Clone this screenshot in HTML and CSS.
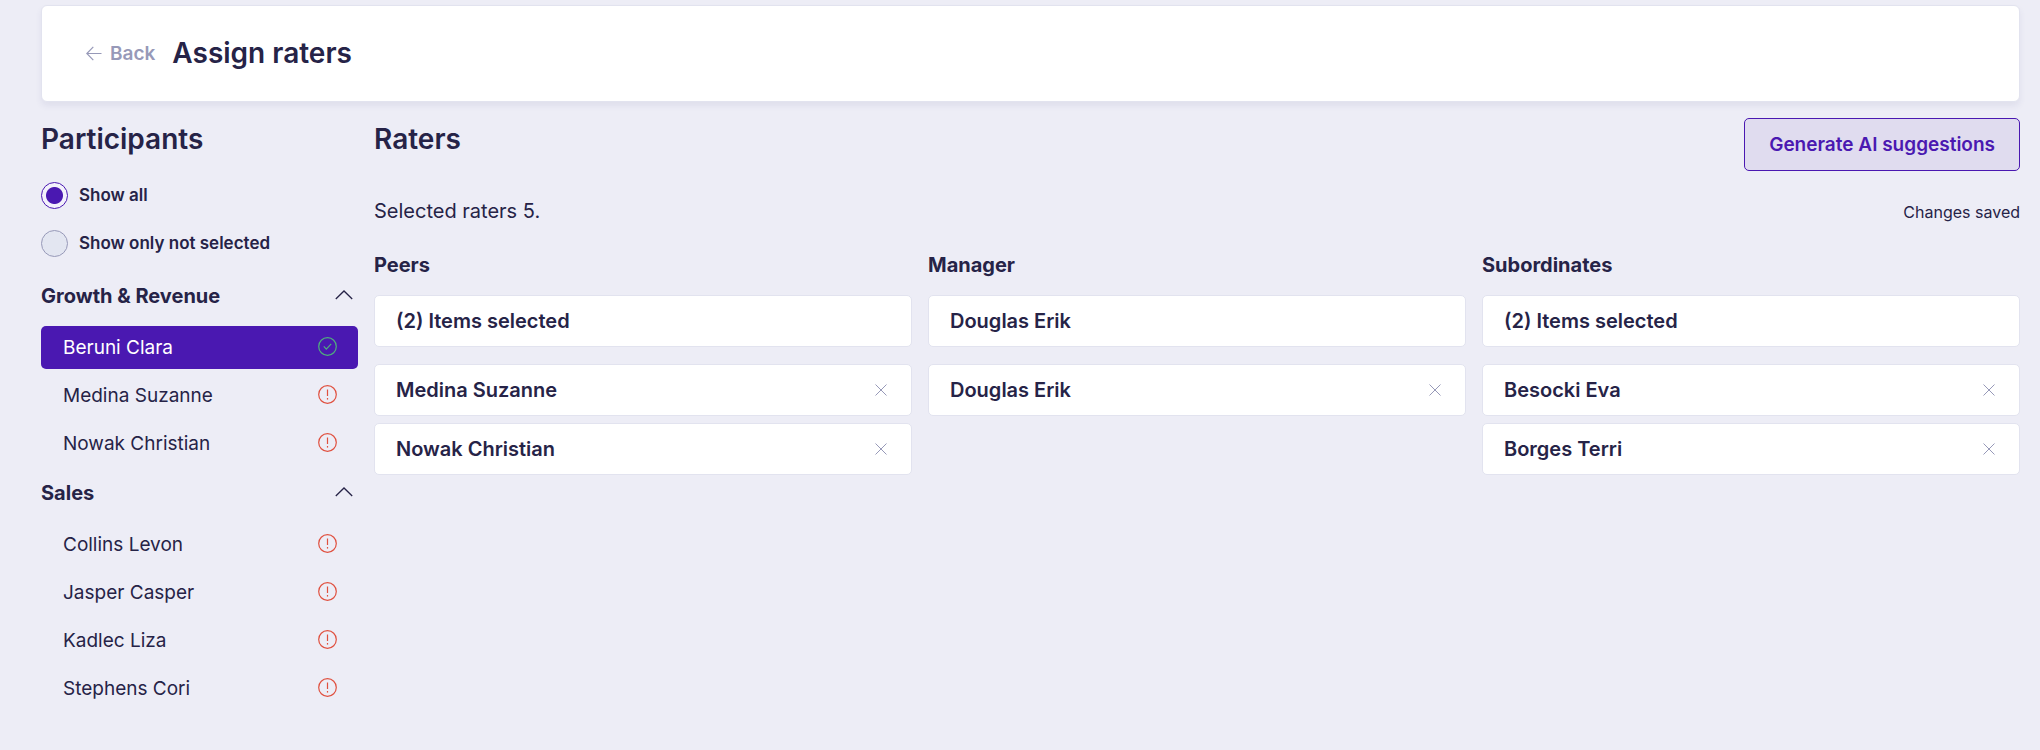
FILE: index.html
```html
<!DOCTYPE html>
<html lang="en">
<head>
<meta charset="utf-8">
<meta name="viewport" content="width=device-width, initial-scale=1">
<title>Assign raters</title>
<link rel="stylesheet" href="styles.css">
</head>
<body>
<svg class="sprite" aria-hidden="true">
  <symbol id="i-alert" viewBox="0 0 19 19"><circle cx="9.5" cy="9.5" r="8.8"/><path d="M9.5 4.500v6.500"/><path d="M9.5 13v1.600"/></symbol>
  <symbol id="i-check" viewBox="0 0 19 19"><circle cx="9.5" cy="9.5" r="8.8"/><path d="M5.8 9.4l2.5 2.7 4.9-5.3"/></symbol>
  <symbol id="i-close" viewBox="0 0 12 12"><path d="M.5.5l11 11M11.500.5l-11 11"/></symbol>
  <symbol id="i-chevron" viewBox="0 0 18 10"><path d="M.8 9L9 1l8.200 8"/></symbol>
  <symbol id="i-back" viewBox="0 0 16 15"><path d="M15.500 7.500H.8M7.300.8L.8 7.500l6.500 6.700"/></symbol>
</svg>
<div class="page">
  <header class="topbar">
    <a class="back" href="#"><svg class="icon-back" aria-hidden="true"><use href="#i-back"/></svg>Back</a>
    <h1 class="heading">Assign raters</h1>
  </header>
  <div class="layout">
    <aside class="sidebar">
      <h2 class="heading">Participants</h2>
      <div class="filters">
        <label class="filter"><input class="radio" type="radio" name="filter" checked>Show all</label>
        <label class="filter"><input class="radio" type="radio" name="filter">Show only not selected</label>
      </div>
      <section class="group">
        <button class="group-toggle" type="button" aria-expanded="true">Growth &amp; Revenue<svg class="icon-chevron" aria-hidden="true"><use href="#i-chevron"/></svg></button>
        <div class="people">
          <button class="person person-active" type="button">Beruni Clara<svg class="icon-status done" aria-hidden="true"><use href="#i-check"/></svg></button>
          <button class="person" type="button">Medina Suzanne<svg class="icon-status" aria-hidden="true"><use href="#i-alert"/></svg></button>
          <button class="person" type="button">Nowak Christian<svg class="icon-status" aria-hidden="true"><use href="#i-alert"/></svg></button>
        </div>
      </section>
      <section class="group">
        <button class="group-toggle" type="button" aria-expanded="true">Sales<svg class="icon-chevron" aria-hidden="true"><use href="#i-chevron"/></svg></button>
        <div class="people">
          <button class="person" type="button">Collins Levon<svg class="icon-status" aria-hidden="true"><use href="#i-alert"/></svg></button>
          <button class="person" type="button">Jasper Casper<svg class="icon-status" aria-hidden="true"><use href="#i-alert"/></svg></button>
          <button class="person" type="button">Kadlec Liza<svg class="icon-status" aria-hidden="true"><use href="#i-alert"/></svg></button>
          <button class="person" type="button">Stephens Cori<svg class="icon-status" aria-hidden="true"><use href="#i-alert"/></svg></button>
        </div>
      </section>
    </aside>
    <main class="main">
      <div class="main-head">
        <h2 class="heading">Raters</h2>
        <button class="generate" type="button">Generate AI suggestions</button>
      </div>
      <div class="summary">
        <p class="count">Selected raters 5.</p>
        <p class="saved">Changes saved</p>
      </div>
      <div class="columns">
        <section class="column">
          <label class="column-title" for="peers">Peers</label>
          <select class="box picker" id="peers"><option>(2) Items selected</option></select>
          <ul class="chosen">
            <li class="box">Medina Suzanne<button class="remove" type="button" aria-label="Remove Medina Suzanne"><svg class="icon-close" aria-hidden="true"><use href="#i-close"/></svg></button></li>
            <li class="box">Nowak Christian<button class="remove" type="button" aria-label="Remove Nowak Christian"><svg class="icon-close" aria-hidden="true"><use href="#i-close"/></svg></button></li>
          </ul>
        </section>
        <section class="column">
          <label class="column-title" for="manager">Manager</label>
          <select class="box picker" id="manager"><option>Douglas Erik</option></select>
          <ul class="chosen">
            <li class="box">Douglas Erik<button class="remove" type="button" aria-label="Remove Douglas Erik"><svg class="icon-close" aria-hidden="true"><use href="#i-close"/></svg></button></li>
          </ul>
        </section>
        <section class="column">
          <label class="column-title" for="subordinates">Subordinates</label>
          <select class="box picker" id="subordinates"><option>(2) Items selected</option></select>
          <ul class="chosen">
            <li class="box">Besocki Eva<button class="remove" type="button" aria-label="Remove Besocki Eva"><svg class="icon-close" aria-hidden="true"><use href="#i-close"/></svg></button></li>
            <li class="box">Borges Terri<button class="remove" type="button" aria-label="Remove Borges Terri"><svg class="icon-close" aria-hidden="true"><use href="#i-close"/></svg></button></li>
          </ul>
        </section>
      </div>
    </main>
  </div>
</div>
</body>
</html>
```
FILE: styles.css
```css
:root {
  --ink: #262347;
  --muted: #9799b8;
  --accent: #4a18b1;
  --line: #e2e3ef;
  --bg: #ededf6;
}
* { box-sizing: border-box; }
body {
  margin: 0;
  background: var(--bg);
  color: var(--ink);
  font-family: Inter, "Liberation Sans", sans-serif;
  font-size: 19px;
  line-height: 24px;
}
button, select, input { font: inherit; color: inherit; margin: 0; }
button { border: 0; background: none; padding: 0; cursor: pointer; text-align: left; }
h1, h2, p, ul { margin: 0; padding: 0; }
ul { list-style: none; }
svg { fill: none; stroke: currentColor; flex: none; display: block; }
.sprite { display: none; }

.page { padding: 5px 20px 24px 41px; }
.heading { font-size: 28px; font-weight: 600; line-height: 42px; }

.topbar {
  display: flex;
  align-items: center;
  gap: 17px;
  padding: 26px 44px 27px;
  border: 1px solid var(--line);
  border-radius: 6px;
  background: #fff;
  box-shadow: 0 4px 6px rgba(60, 70, 130, .08);
}
.back {
  display: flex;
  align-items: center;
  gap: 8px;
  padding-top: 2px;
  color: var(--muted);
  font-weight: 600;
  text-decoration: none;
}
.icon-back { width: 16px; height: 15px; margin-bottom: 2px; stroke-width: 1.2; }

.layout {
  display: grid;
  grid-template-columns: 317px minmax(0, 1fr);
  gap: 16px;
  padding-top: 16px;
}
.filters { display: grid; gap: 21px; padding: 22px 0 27px; }
.filter {
  display: flex;
  align-items: center;
  gap: 11px;
  font-size: 17px;
  font-weight: 600;
  line-height: 27px;
}
.radio {
  appearance: none;
  width: 27px;
  height: 27px;
  border: 1px solid var(--muted);
  border-radius: 50%;
  background: #e3e6f1;
}
.radio:checked {
  border-color: var(--accent);
  background: radial-gradient(circle, var(--accent) 8px, #f3f1fb 9px);
}
.group + .group { padding-top: 16px; }
.group-toggle {
  display: flex;
  align-items: center;
  justify-content: space-between;
  width: 100%;
  padding-right: 5px;
  font-size: 20px;
  font-weight: 700;
}
.icon-chevron { width: 18px; height: 10px; margin-bottom: 2px; stroke-width: 1.3; }
.people { display: grid; gap: 5px; padding-top: 18px; }
.person {
  display: flex;
  align-items: center;
  justify-content: space-between;
  padding: 10px 21px 9px 22px;
  border-radius: 5px;
}
.person-active { background: var(--accent); color: #fff; }
.icon-status { width: 19px; height: 19px; margin-bottom: 3px; color: #e0503f; stroke-width: 1.2; }
.done { color: #4fae7d; }

.main-head { display: flex; justify-content: space-between; align-items: flex-start; }
.generate {
  padding: 14px 24px 13px;
  border: 1px solid var(--accent);
  border-radius: 5px;
  background: #e0dcef;
  color: var(--accent);
  font-weight: 600;
}
.summary { display: flex; justify-content: space-between; align-items: baseline; padding-top: 28px; }
.count { font-size: 20px; }
.saved { font-size: 16px; }
.columns { display: grid; grid-template-columns: repeat(3, minmax(0, 1fr)); gap: 16px; padding-top: 29px; }
.column-title { display: block; font-size: 20px; font-weight: 700; padding-bottom: 18px; }
.box {
  display: flex;
  align-items: center;
  justify-content: space-between;
  width: 100%;
  padding: 13px 24px 13px 21px;
  border: 1px solid var(--line);
  border-radius: 5px;
  background: #fff;
  font-size: 20px;
  font-weight: 600;
  line-height: 24px;
}
.picker { appearance: none; }
.chosen { display: grid; gap: 7px; padding-top: 17px; }
.remove { color: var(--muted); }
.icon-close { width: 12px; height: 12px; }
```
